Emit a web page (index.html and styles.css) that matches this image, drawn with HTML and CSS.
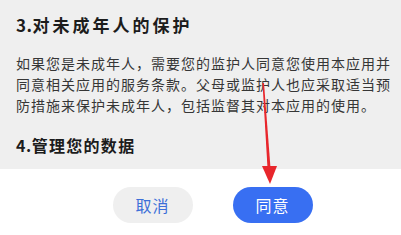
FILE: index.html
```html
<!DOCTYPE html>
<html>
<head>
<title>协议</title>
<meta charset="utf-8">
<link rel="stylesheet" href="styles.css">
</head>
<body>
<div class="sheet">
	<h2 class="t1"><span class="num">3.</span>对未成年人的保护</h2>
	<p class="text">如果您是未成年人，需要您的监护人同意您使用本应用并同意相关应用的服务条款。父母或监护人也应采取适当预防措施来保护未成年人，包括监督其对本应用的使用。</p>
	<h2 class="t2"><span class="num">4.</span>管理您的数据</h2>
</div>
<div class="actions">
	<button class="btn cancel">取消</button>
	<button class="btn ok">同意</button>
</div>
<svg class="arrow" width="401" height="235" viewBox="0 0 401 235">
	<polygon points="262.5,83 264,83 270.5,168 267.5,168" fill="#e8262c"/>
	<polygon points="262,166 277,166 270,184" fill="#e8262c"/>
</svg>
</body>
</html>
```
FILE: styles.css
```css
body {
	margin: 0;
	width: 401px;
	height: 235px;
	overflow: hidden;
	position: relative;
	background: #fff;
	font-family: "Noto Sans CJK SC", "Noto Sans", sans-serif;
}
.sheet {
	background: #efefef;
	height: 169px;
	box-sizing: border-box;
	padding: 12px 4px 0 16px;
}
.num {
	letter-spacing: 0.5px;
}
.t1 {
	margin: 0;
	font-size: 17px;
	line-height: 25px;
	letter-spacing: 3px;
	font-weight: bold;
	color: #1c1c1c;
}
.text {
	margin: 16px 0 0;
	font-size: 14px;
	line-height: 21px;
	letter-spacing: 1px;
	color: #363636;
}
.t2 {
	margin: 17px 0 0;
	font-size: 16px;
	line-height: 24px;
	letter-spacing: 1.3px;
	font-weight: bold;
	color: #1c1c1c;
}
.actions {
	display: flex;
	justify-content: center;
	gap: 40px;
	padding: 18px 0 0 24px;
}
.btn {
	width: 80px;
	height: 36px;
	border: none;
	border-radius: 18px;
	font-family: inherit;
	font-size: 16px;
	letter-spacing: 1px;
	padding: 0;
}
.cancel {
	background: #efefef;
	color: #3d6fd8;
}
.ok {
	background: #386ff2;
	color: #fff;
}
.arrow {
	position: absolute;
	left: 0;
	top: 0;
	pointer-events: none;
}
```
